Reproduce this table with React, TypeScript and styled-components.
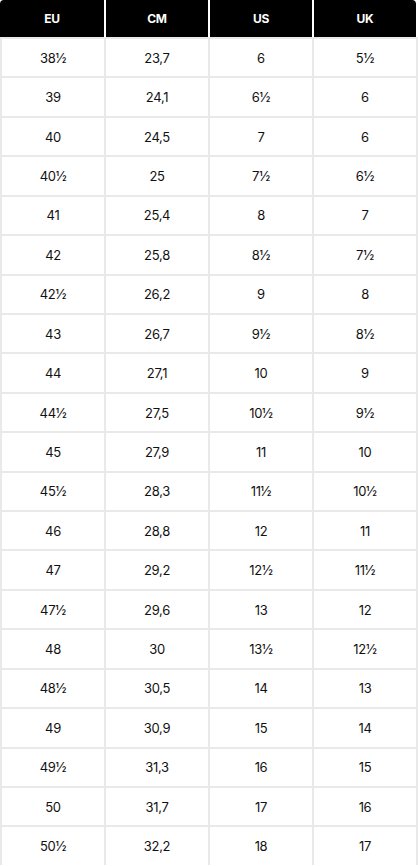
import React from "react";
import styled, { createGlobalStyle } from "styled-components";

const Global = createGlobalStyle`
  html, body { margin: 0; padding: 0; background: #ffffff; }
  body { font-family: "Inter", "Lato", "Liberation Sans", sans-serif; }
`;

const Wrapper = styled.div`
  width: 418px;
  background: #ffffff;
`;

const HeaderRow = styled.div`
  display: grid;
  grid-template-columns: 104px 102px 102px 102px;
  column-gap: 2px;
  padding-right: 2px;
  height: 37px;
  background: #ffffff;
`;

const HeadCell = styled.div<{ $first?: boolean; $last?: boolean }>`
  background: #000000;
  color: #ffffff;
  display: flex;
  align-items: center;
  justify-content: center;
  font-size: 12px;
  font-weight: 700;
  letter-spacing: -0.2px;
  border-top-left-radius: ${(p) => (p.$first ? "4px" : "0")};
  border-top-right-radius: ${(p) => (p.$last ? "4px" : "0")};
`;

const Body = styled.div`
  display: grid;
  grid-template-columns: repeat(4, 102px);
  grid-auto-rows: 37.43px;
  gap: 2px;
  padding: 2px 2px 0 2px;
  background: #e9e9e9;
`;

const Cell = styled.div`
  background: #ffffff;
  color: #111111;
  display: flex;
  align-items: center;
  justify-content: center;
  font-size: 13px;
  font-weight: 400;
  letter-spacing: -0.3px;
`;

const heads = ["EU", "CM", "US", "UK"];

const rows: string[][] = [
  ["38½", "23,7", "6", "5½"],
  ["39", "24,1", "6½", "6"],
  ["40", "24,5", "7", "6"],
  ["40½", "25", "7½", "6½"],
  ["41", "25,4", "8", "7"],
  ["42", "25,8", "8½", "7½"],
  ["42½", "26,2", "9", "8"],
  ["43", "26,7", "9½", "8½"],
  ["44", "27,1", "10", "9"],
  ["44½", "27,5", "10½", "9½"],
  ["45", "27,9", "11", "10"],
  ["45½", "28,3", "11½", "10½"],
  ["46", "28,8", "12", "11"],
  ["47", "29,2", "12½", "11½"],
  ["47½", "29,6", "13", "12"],
  ["48", "30", "13½", "12½"],
  ["48½", "30,5", "14", "13"],
  ["49", "30,9", "15", "14"],
  ["49½", "31,3", "16", "15"],
  ["50", "31,7", "17", "16"],
  ["50½", "32,2", "18", "17"],
];

export default function App() {
  return (
    <Wrapper>
      <Global />
      <HeaderRow>
        {heads.map((h, i) => (
          <HeadCell key={h} $first={i === 0} $last={i === heads.length - 1}>
            {h}
          </HeadCell>
        ))}
      </HeaderRow>
      <Body>
        {rows.map((r, ri) =>
          r.map((v, ci) => <Cell key={`${ri}-${ci}`}>{v}</Cell>)
        )}
      </Body>
    </Wrapper>
  );
}
